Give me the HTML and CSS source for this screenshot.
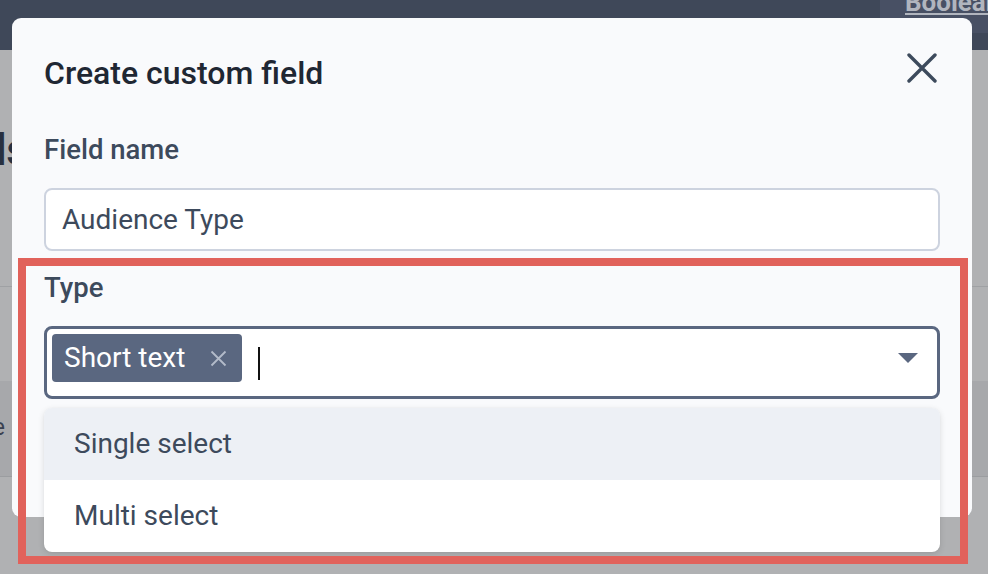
FILE: index.html
```html
<!DOCTYPE html>
<html lang="en">
<head>
<meta charset="utf-8">
<title>Create custom field</title>
<link rel="stylesheet" href="styles.css">
</head>
<body>
<div class="page">
  <header class="topbar">
    <div class="topbar-cell"><a class="topbar-link">Boolean</a></div>
  </header>
  <div class="band band-a"><div class="page-title-wrap"><h1 class="page-title">Custom fields</h1></div></div>
  <div class="band band-b"></div>
  <div class="band band-c"><div class="cell-wrap"><span class="cell-text">Type</span></div></div>
  <div class="band band-d"></div>
</div>

<div class="modal">
  <div class="modal-header">
    <h2 class="modal-title">Create custom field</h2>
    <button class="close-btn" aria-label="Close">
      <svg width="30" height="30" viewBox="0 0 30 30"><path d="M2 2 L28 28 M28 2 L2 28" stroke="#3d4a5c" stroke-width="3.4" stroke-linecap="round" fill="none"/></svg>
    </button>
  </div>

  <div class="field">
    <label class="field-label">Field name</label>
    <div class="text-input">Audience Type</div>
  </div>

  <div class="field field-type">
    <label class="field-label field-label-type">Type</label>
    <div class="select-wrap">
      <div class="select">
        <span class="tag">Short text
          <svg class="tag-x" width="17" height="17" viewBox="0 0 17 17"><path d="M1.5 1.5 L15.5 15.5 M15.5 1.5 L1.5 15.5" stroke="#b3bbc9" stroke-width="1.8" fill="none"/></svg>
        </span>
        <span class="caret"></span>
        <svg class="arrow" width="20" height="10" viewBox="0 0 20 10"><path d="M0 0 L20 0 L10 10 Z" fill="#5a6780"/></svg>
      </div>
    </div>
  </div>

  <div class="modal-footer">
    <button class="footer-btn">Create field</button>
    <button class="footer-btn">Cancel</button>
  </div>
</div>

<ul class="menu">
  <li class="menu-item menu-item-active">Single select</li>
  <li class="menu-item">Multi select</li>
</ul>

<div class="highlight"></div>
</body>
</html>
```

FILE: styles.css
```css
html, body {
  margin: 0;
  padding: 0;
}
body {
  width: 988px;
  height: 574px;
  overflow: hidden;
  position: relative;
  font-family: Roboto, "Liberation Sans", sans-serif;
  background: #b0b1b3;
}

/* background page (under overlay) */
.page {
  display: flex;
  flex-direction: column;
  height: 574px;
}
.topbar {
  height: 50px;
  background: #3f4859;
  display: flex;
  justify-content: flex-end;
  align-items: flex-start;
  flex: none;
}
.topbar-cell {
  width: 108px;
  height: 33px;
  background: #485064;
  padding-left: 25px;
  box-sizing: border-box;
  overflow: hidden;
}
.topbar-link {
  display: block;
  margin-top: -11px;
  font-size: 26px;
  line-height: 26px;
  font-weight: 700;
  color: #b1b5be;
  text-decoration: underline;
  text-decoration-thickness: 2px;
  text-underline-offset: 2px;
  white-space: nowrap;
}
.band {
  flex: none;
  background: #b0b1b3;
}
.band-a {
  height: 237px;
  border-bottom: 1px solid #9fa1a4;
  padding-top: 74px;
  box-sizing: border-box;
}
.page-title-wrap {
  width: 29px;
  display: flex;
  justify-content: flex-end;
}
.page-title {
  margin: 0;
  font-size: 44px;
  line-height: 52px;
  font-weight: 700;
  color: #283040;
  white-space: nowrap;
}
.band-b {
  height: 94px;
}
.band-c {
  height: 96px;
  background: #a7a8ab;
  border-bottom: 1px solid #9b9da0;
  padding-top: 31px;
  box-sizing: border-box;
}
.cell-wrap {
  width: 5px;
  display: flex;
  justify-content: flex-end;
}
.cell-text {
  font-size: 23px;
  line-height: 32px;
  color: #3a4150;
  white-space: nowrap;
}
.band-d {
  flex: 1;
}

/* modal */
.modal {
  position: absolute;
  left: 12px;
  top: 18px;
  width: 960px;
  height: 499px;
  box-sizing: border-box;
  background: #f9fafc;
  border-radius: 9px;
  padding: 35px 32px 0 32px;
  display: flex;
  flex-direction: column;
  z-index: 1;
}
.modal-header {
  display: flex;
  justify-content: space-between;
  align-items: flex-start;
  height: 40px;
  margin-bottom: 41px;
}
.modal-title {
  margin: 0;
  font-size: 32px;
  line-height: 40px;
  font-weight: 500;
  color: #1f2733;
}
.close-btn {
  background: none;
  border: 0;
  padding: 0;
  width: 30px;
  height: 30px;
  margin-right: 3px;
  display: block;
}
.close-btn svg {
  display: block;
}
.field {
  display: flex;
  flex-direction: column;
}
.field-label {
  display: block;
  font-size: 27.5px;
  line-height: 32px;
  font-weight: 500;
  color: #3d4a5c;
  margin-bottom: 22px;
}
.field-label-type {
  margin-bottom: 22px;
}
.text-input {
  height: 63px;
  box-sizing: border-box;
  border: 2px solid #cdd3df;
  border-radius: 8px;
  background: #ffffff;
  padding-left: 16px;
  display: flex;
  align-items: center;
  font-size: 28px;
  color: #3d4a5c;
}
.field-type {
  margin-top: 21px;
}
.select-wrap {
  position: relative;
}
.select {
  height: 73px;
  box-sizing: border-box;
  border: 3px solid #5a6780;
  border-radius: 8px;
  background: #ffffff;
  padding: 5px;
  display: flex;
  align-items: flex-start;
}
.tag {
  height: 48px;
  box-sizing: border-box;
  background: #5a6780;
  border-radius: 4px;
  padding: 0 15px 0 12px;
  display: flex;
  align-items: center;
  font-size: 28px;
  line-height: 48px;
  color: #ffffff;
  white-space: nowrap;
}
.tag-x {
  margin-left: 25px;
  display: block;
}
.caret {
  width: 2px;
  height: 33px;
  background: #111111;
  margin-left: 16px;
  margin-top: 13px;
}
.arrow {
  margin-left: auto;
  margin-right: 14px;
  margin-top: 19px;
  display: block;
}
/* dropdown popover, laid over the modal */
.menu {
  position: absolute;
  left: 44px;
  top: 408px;
  width: 896px;
  margin: 0;
  padding: 0;
  list-style: none;
  background: #ffffff;
  border-radius: 8px;
  overflow: hidden;
  box-shadow: 0 2px 6px rgba(0, 0, 0, 0.12), 0 0 1px rgba(0, 0, 0, 0.08);
  z-index: 3;
}
.menu-item {
  height: 72px;
  line-height: 72px;
  padding-left: 30px;
  font-size: 28px;
  color: #3d4a5c;
}
.menu-item-active {
  background: #edf0f5;
}
.modal-footer {
  margin-top: 30px;
  display: flex;
  justify-content: space-between;
  padding: 0 180px 0 95px;
}
.footer-btn {
  background: none;
  border: 0;
  padding: 0;
  font-family: Roboto, "Liberation Sans", sans-serif;
  font-size: 28px;
  line-height: 48px;
  font-weight: 500;
  color: #3d4a5c;
}

/* annotation */
.highlight {
  position: absolute;
  left: 18px;
  top: 258px;
  width: 950px;
  height: 306px;
  box-sizing: border-box;
  border: 8px solid #e1625b;
  pointer-events: none;
  z-index: 5;
}
```
